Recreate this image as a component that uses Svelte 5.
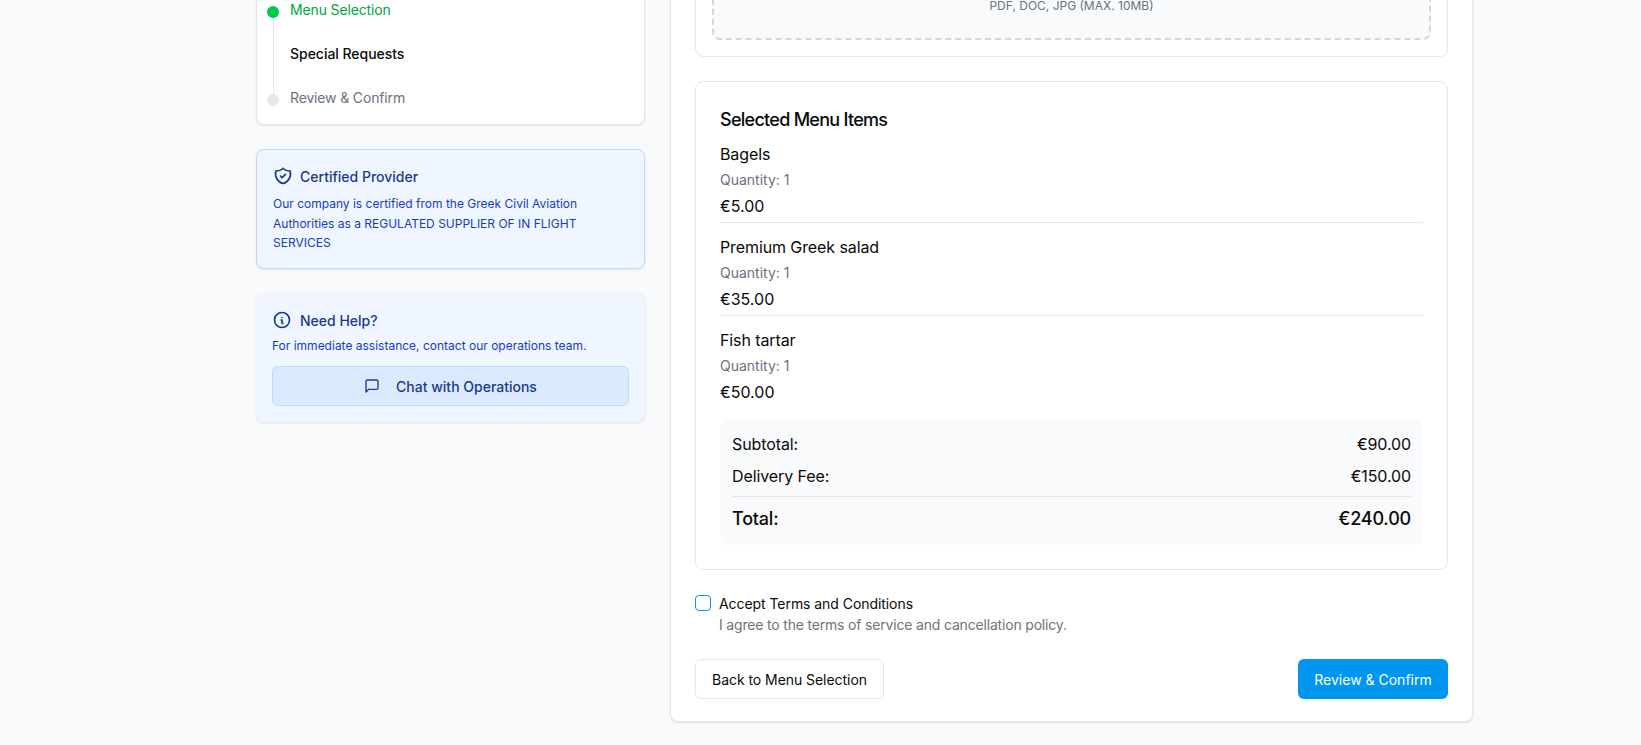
<script>
  const items = [
    { name: 'Bagels', qty: 1, price: '€5.00' },
    { name: 'Premium Greek salad', qty: 1, price: '€35.00' },
    { name: 'Fish tartar', qty: 1, price: '€50.00' }
  ];
</script>

<div class="page">
  <div class="layout">
    <aside class="side">
      <div class="card steps">
        <div class="step done"><span class="dot"></span>Menu Selection</div>
        <div class="step current">Special Requests</div>
        <div class="step todo"><span class="dot"></span>Review &amp; Confirm</div>
      </div>

      <div class="card cert">
        <div class="info-head">
          <svg width="20" height="20" viewBox="0 0 24 24" fill="none" stroke="currentColor" stroke-width="2" stroke-linecap="round" stroke-linejoin="round">
            <path d="M12 3a12 12 0 0 0 8.5 3a12 12 0 0 1 -8.5 15a12 12 0 0 1 -8.5 -15a12 12 0 0 0 8.5 -3" />
            <path d="M9 12l2 2l4 -4" />
          </svg>
          <span>Certified Provider</span>
        </div>
        <p>Our company is certified from the Greek Civil Aviation Authorities as a REGULATED SUPPLIER OF IN FLIGHT SERVICES</p>
      </div>

      <div class="card help">
        <div class="info-head">
          <svg width="20" height="20" viewBox="0 0 24 24" fill="none" stroke="currentColor" stroke-width="2" stroke-linecap="round" stroke-linejoin="round">
            <circle cx="12" cy="12" r="9" />
            <path d="M12 9h.01" />
            <path d="M11 12h1v4h1" />
          </svg>
          <span>Need Help?</span>
        </div>
        <p>For immediate assistance, contact our operations team.</p>
        <button class="chat">
          <svg width="16" height="16" viewBox="0 0 24 24" fill="none" stroke="currentColor" stroke-width="2" stroke-linecap="round" stroke-linejoin="round">
            <path d="M21 15a2 2 0 0 1-2 2H7l-4 4V5a2 2 0 0 1 2-2h14a2 2 0 0 1 2 2z" />
          </svg>
          <span>Chat with Operations</span>
        </button>
      </div>
    </aside>

    <main class="card form">
      <div class="card upload">
        <div class="drop">PDF, DOC, JPG (MAX. 10MB)</div>
      </div>

      <div class="card selected">
        <h3>Selected Menu Items</h3>
        {#each items as item, i}
          <div class="item" class:last={i === items.length - 1}>
            <div class="name">{item.name}</div>
            <div class="qty">Quantity: {item.qty}</div>
            <div class="price">{item.price}</div>
          </div>
        {/each}
        <div class="summary">
          <div class="row"><span>Subtotal:</span><span>€90.00</span></div>
          <div class="row"><span>Delivery Fee:</span><span>€150.00</span></div>
          <div class="row total"><span>Total:</span><span>€240.00</span></div>
        </div>
      </div>

      <div class="terms">
        <span class="check"></span>
        <div>
          <div class="terms-title">Accept Terms and Conditions</div>
          <div class="terms-sub">I agree to the terms of service and cancellation policy.</div>
        </div>
      </div>

      <div class="actions">
        <button class="back">Back to Menu Selection</button>
        <button class="next">Review &amp; Confirm</button>
      </div>
    </main>
  </div>
</div>

<style>
  :global(body) {
    background: #f9fafb;
    font-family: Inter, "Liberation Sans", sans-serif;
  }

  .page {
    height: 745px;
    overflow: hidden;
  }

  .layout {
    display: flex;
    align-items: flex-start;
    gap: 25px;
    width: 1217px;
    margin-left: 256px;
    margin-top: -100px;
  }

  .card {
    background: #fff;
    border: 1px solid #e5e7eb;
    border-radius: 8px;
    box-sizing: border-box;
  }

  .side {
    width: 389px;
    flex: none;
    display: flex;
    flex-direction: column;
    gap: 24px;
  }

  .steps {
    position: relative;
    height: 225px;
    padding: 87px 0 0 33px;
    box-shadow: 0 1px 2px rgba(0, 0, 0, 0.1);
  }

  .steps::before {
    content: "";
    position: absolute;
    left: 16px;
    top: 110px;
    height: 97px;
    width: 1px;
    background: #e5e7eb;
  }

  .step {
    position: relative;
    height: 44px;
    line-height: 44px;
    font-size: 14px;
    letter-spacing: -0.15px;
    color: #111827;
  }

  .step.current {
    font-weight: 450;
    letter-spacing: -0.03px;
    color: #0a0a0a;
  }

  .step.done {
    color: #00a63e;
  }

  .step.todo {
    color: #6b7280;
  }

  .dot {
    position: absolute;
    left: -23px;
    top: 18px;
    width: 12px;
    height: 12px;
    border-radius: 50%;
    background: #00c950;
  }

  .todo .dot {
    background: #e5e7eb;
  }

  .cert {
    background: #eff6ff;
    border-color: #bedbff;
    padding: 14px 15px;
    height: 120px;
    box-shadow: 0 1px 3px rgba(0, 0, 0, 0.1);
  }

  .help {
    background: #eff6ff;
    border-color: #eff6ff;
    padding: 14px 15px;
    height: 129px;
    box-shadow: 0 1px 3px rgba(0, 0, 0, 0.1);
  }

  .info-head {
    display: flex;
    align-items: center;
    gap: 8px;
    font-size: 14px;
    font-weight: 450;
    color: #1c398e;
    height: 24px;
  }

  .cert .info-head {
    margin-left: 1px;
    gap: 7px;
  }

  .cert p,
  .help p {
    margin: 6px 0 0;
    font-size: 12px;
    line-height: 19.5px;
    color: #193cb8;
  }

  .cert p {
    padding-left: 1px;
  }

  .help p {
    margin-top: 4px;
    line-height: 20px;
  }

  .chat {
    display: flex;
    align-items: center;
    justify-content: center;
    gap: 16px;
    width: 100%;
    height: 40px;
    margin-top: 10px;
    background: #dbeafe;
    border: 1px solid #bedbff;
    border-radius: 6px;
    color: #1c398e;
    font: 450 14px Inter, sans-serif;
  }

  .form {
    flex: 1;
    padding: 32px 24px 24px;
    height: 822px;
    box-shadow: 0 1px 2px rgba(0, 0, 0, 0.1);
  }

  .upload {
    height: 124px;
    padding: 0 16px 16px;
    display: flex;
    margin-bottom: 24px;
  }

  .drop {
    flex: 1;
    box-sizing: border-box;
    background: #f9fafb;
    border: 2px dashed #d1d5dc;
    border-top: none;
    border-radius: 0 0 8px 8px;
    display: flex;
    align-items: flex-end;
    justify-content: center;
    padding-bottom: 25px;
    font-size: 12px;
    color: #6b7280;
  }

  .selected {
    padding: 24px;
    height: 489px;
  }

  h3 {
    margin: 0 0 8px;
    font-size: 18px;
    font-weight: 550;
    line-height: 28px;
    letter-spacing: -0.72px;
    color: #0a0a0a;
  }

  .item {
    border-bottom: 1px solid #e5e7eb;
    padding-bottom: 4px;
    margin-bottom: 12px;
    color: #0a0a0a;
  }

  .item.last {
    border-bottom: none;
  }

  .name {
    font-size: 16px;
    line-height: 24px;
    letter-spacing: -0.1px;
  }

  .qty {
    font-size: 14px;
    line-height: 20px;
    color: #6b7280;
    margin-top: 4px;
  }

  .price {
    font-size: 16px;
    line-height: 24px;
    margin-top: 4px;
  }

  .summary {
    background: #f9fafb;
    border-radius: 8px;
    padding: 12px;
    height: 125px;
    box-sizing: border-box;
  }

  .row {
    display: flex;
    justify-content: space-between;
    font-size: 16px;
    line-height: 24px;
    letter-spacing: -0.1px;
    margin-bottom: 8px;
    color: #0a0a0a;
  }

  .row.total {
    border-top: 1px solid #e5e7eb;
    margin: 8px 0 0;
    padding-top: 8px;
    font-size: 18px;
    font-weight: 500;
    line-height: 28px;
    letter-spacing: -0.2px;
  }

  .terms {
    display: flex;
    gap: 8px;
    margin-top: 24px;
  }

  .check {
    width: 16px;
    height: 16px;
    box-sizing: border-box;
    border: 1px solid #0096f0;
    border-radius: 4px;
    margin-top: 1px;
  }

  .terms-title {
    font-size: 14px;
    line-height: 20px;
    letter-spacing: -0.06px;
    color: #0a0a0a;
  }

  .terms-sub {
    font-size: 14px;
    line-height: 20px;
    letter-spacing: -0.18px;
    color: #78716c;
    margin-top: 1px;
  }

  .actions {
    display: flex;
    justify-content: space-between;
    margin-top: 24px;
  }

  .actions button {
    height: 40px;
    border-radius: 6px;
    font: 14px Inter, sans-serif;
  }

  .back {
    width: 189px;
    background: #fff;
    border: 1px solid #e5e7eb;
    color: #0a0a0a;
    letter-spacing: -0.05px;
  }

  .next {
    width: 150px;
    background: #0096f0;
    border: none;
    color: #fff;
  }
</style>
